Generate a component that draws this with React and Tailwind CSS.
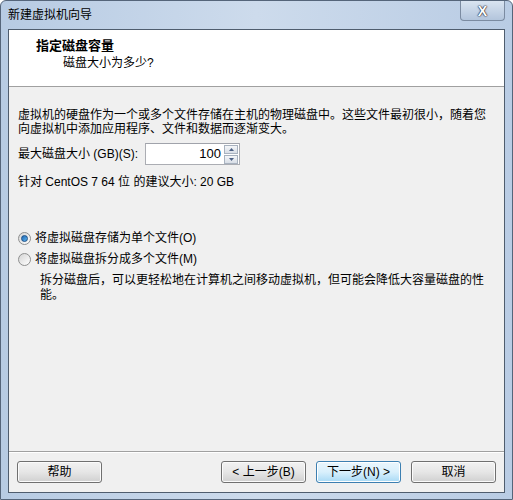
import React from "react";

const font = { fontFamily: '"Liberation Sans", "Noto Sans CJK SC", sans-serif' };

function Button({ children, focused }) {
  return (
    <button
      className={
        focused
          ? "w-[85px] h-[22px] rounded-[3px] border border-[#3c7fb1] bg-gradient-to-b from-[#eaf6fd] via-[#d9f0fc] to-[#a7d9f5] text-[12px] text-black shadow-[inset_0_0_0_1px_#ffffff]"
          : "w-[85px] h-[22px] rounded-[3px] border border-[#707070] bg-gradient-to-b from-[#f2f2f2] via-[#e6e6e6] to-[#d0d0d0] text-[12px] text-black shadow-[inset_0_0_0_1px_#fbfbfb]"
      }
    >
      {children}
    </button>
  );
}

function Radio({ checked, label }) {
  return (
    <div className="flex items-center h-[20px]">
      <span className="w-[13px] h-[13px] rounded-full border border-[#8e8f8f] bg-gradient-to-br from-[#d5d5d5] to-[#ffffff] flex items-center justify-center">
        {checked && (
          <span className="w-[7px] h-[7px] rounded-full bg-gradient-to-br from-[#1f6ab7] to-[#5eb3ec] border border-[#1b4f86]" />
        )}
      </span>
      <span className="ml-[4px]">{label}</span>
    </div>
  );
}

export default function App() {
  return (
    <div
      className="w-[513px] h-[500px] bg-gradient-to-r from-[#b7cbe3] via-[#cddbec] to-[#b9cce4] flex flex-col text-[12px] text-black rounded-t-[6px] border border-[#55657a] overflow-hidden"
      style={font}
    >
      {/* title bar */}
      <div className="h-[28px] flex items-start justify-between">
        <span className="mt-[7px] ml-[7px] text-[12px] leading-[14px]">新建虚拟机向导</span>
        <div className="mr-[7px] w-[45px] h-[20px] rounded-b-[4px] border border-t-0 border-[#7b8ba1] bg-gradient-to-b from-[#d9e4f1] to-[#b3c5dc] flex items-center justify-center">
          <span className="text-[14px] font-bold text-white leading-none [text-shadow:0_0_1px_#223,0_0_1px_#223,0_0_2px_#445]">
            X
          </span>
        </div>
      </div>

      {/* client area */}
      <div className="mx-[7px] flex-1 flex flex-col border border-[#4f5d6e] bg-[#f0f0f0] mb-[6px]">
        {/* header */}
        <div className="h-[57px] bg-white border-b border-[#a0a0a0] pt-[8px]">
          <div className="ml-[27px] text-[13px] font-bold leading-[16px]">指定磁盘容量</div>
          <div className="ml-[54px] mt-[2px] leading-[14px]">磁盘大小为多少?</div>
        </div>

        {/* body */}
        <div className="flex-1 px-[9px] pt-[21px] leading-[14px]">
          <p>虚拟机的硬盘作为一个或多个文件存储在主机的物理磁盘中。这些文件最初很小，随着您</p>
          <p>向虚拟机中添加应用程序、文件和数据而逐渐变大。</p>

          <div className="flex items-center mt-[7px] h-[22px]">
            <span className="w-[127px]">最大磁盘大小 (GB)(S):</span>
            <div className="flex h-[22px] border border-[#abadb3] border-t-[#a0a3ab] bg-white">
              <span className="w-[78px] text-right pr-[3px] leading-[20px] text-[13px]">100</span>
              <div className="w-[15px] flex flex-col justify-center gap-[1px] pr-[1px]">
                <div className="h-[9px] border border-[#a8b2bf] bg-gradient-to-b from-[#f4f6f9] to-[#d8dee6] flex items-center justify-center">
                  <svg width="5" height="3" viewBox="0 0 5 3"><path d="M0 3 L2.5 0 L5 3 Z" fill="#4d6185" /></svg>
                </div>
                <div className="h-[9px] border border-[#a8b2bf] bg-gradient-to-b from-[#f4f6f9] to-[#d8dee6] flex items-center justify-center">
                  <svg width="5" height="3" viewBox="0 0 5 3"><path d="M0 0 L2.5 3 L5 0 Z" fill="#4d6185" /></svg>
                </div>
              </div>
            </div>
          </div>

          <p className="mt-[10px]">针对 CentOS 7 64 位 的建议大小: 20 GB</p>

          <div className="mt-[39px] flex flex-col gap-[1px]">
            <Radio checked label="将虚拟磁盘存储为单个文件(O)" />
            <Radio label="将虚拟磁盘拆分成多个文件(M)" />
          </div>
          <div className="ml-[22px] mt-[4px] leading-[15px]">
            <p>拆分磁盘后，可以更轻松地在计算机之间移动虚拟机，但可能会降低大容量磁盘的性</p>
            <p>能。</p>
          </div>
        </div>

        {/* footer */}
        <div className="h-[41px] border-t border-[#a0a0a0] shadow-[inset_0_1px_0_#ffffff] flex items-center px-[8px] pb-[1px]">
          <Button>帮助</Button>
          <div className="flex-1" />
          <div className="flex gap-[10px]">
            <Button>&lt; 上一步(B)</Button>
            <Button focused>下一步(N) &gt;</Button>
            <Button>取消</Button>
          </div>
        </div>
      </div>
    </div>
  );
}
